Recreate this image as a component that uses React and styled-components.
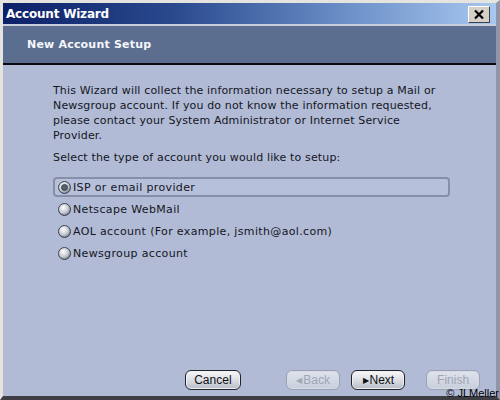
import styled, { createGlobalStyle } from "styled-components";

const Global = createGlobalStyle`
  html, body { margin: 0; padding: 0; background: #b1bbd6; }
  body { font-family: "DejaVu Sans", Verdana, sans-serif; }
`;

const accounts = [
  "ISP or email provider",
  "Netscape WebMail",
  "AOL account (For example, jsmith@aol.com)",
  "Newsgroup account",
];

const Radio = ({ checked }) => (
  <RadioDot viewBox="0 0 13 13" width="13" height="13">
    <defs>
      <radialGradient id={checked ? "rg-on" : "rg-off"} cx="40%" cy="35%" r="70%">
        <stop offset="0" stopColor="#ffffff" />
        <stop offset="0.6" stopColor="#c4c8d0" />
        <stop offset="1" stopColor="#6a707c" />
      </radialGradient>
    </defs>
    <circle cx="6.5" cy="6.5" r="6" fill={`url(#${checked ? "rg-on" : "rg-off"})`} stroke="#3c4250" strokeWidth="1" />
    {checked && <circle cx="6.5" cy="6.5" r="3" fill="#5a6070" stroke="#2e3340" strokeWidth="0.8" />}
  </RadioDot>
);

const App = () => {
  return (
    <>
      <Global />
      <Window>
        <TitleBar>
          <Title>Account Wizard</Title>
          <CloseButton>
            <svg width="12" height="11" viewBox="0 0 12 11">
              <path d="M2 1.5 L10 9.5 M10 1.5 L2 9.5" stroke="#000" strokeWidth="2.2" />
            </svg>
          </CloseButton>
        </TitleBar>
        <HeaderPanel>New Account Setup</HeaderPanel>
        <Body>
          <Intro>
            This Wizard will collect the information necessary to setup a Mail or
            <br />
            Newsgroup account. If you do not know the information requested,
            <br />
            please contact your System Administrator or Internet Service
            <br />
            Provider.
          </Intro>
          <Prompt>Select the type of account you would like to setup:</Prompt>
          <Options>
            {accounts.map((label, i) => (
              <Option key={label} $focused={i === 0}>
                <Radio checked={i === 0} />
                <span>{label}</span>
              </Option>
            ))}
          </Options>
        </Body>
        <Footer>
          <WizButton $w={56}>Cancel</WizButton>
          <Spacer />
          <WizButton disabled $w={55}>
            <Arrow>◀</Arrow>Back
          </WizButton>
          <WizButton $w={54}>
            <Arrow>▶</Arrow>Next
          </WizButton>
          <WizButton disabled $w={54} $gapBefore={10}>
            Finish
          </WizButton>
        </Footer>
        <Credit>© JLMeller</Credit>
      </Window>
    </>
  );
};

const Window = styled.div`
  position: relative;
  box-sizing: border-box;
  width: 500px;
  height: 400px;
  display: flex;
  flex-direction: column;
  background: #b1bbd6;
  border-top: 3px solid #e6e4de;
  border-left: 3px solid #e6e4de;
  border-right: 4px solid #8e96a8;
  border-bottom: 4px solid #3e3e44;
`;

const TitleBar = styled.div`
  height: 21px;
  display: flex;
  align-items: center;
  justify-content: space-between;
  padding: 0 6px 0 3px;
  background: linear-gradient(90deg, #0c2068 0%, #2a4a8e 35%, #6c90c8 70%, #a8c8f0 100%);
  border-bottom: 2px solid #c6cedc;
`;

const Title = styled.div`
  color: #ffffff;
  font-weight: bold;
  font-size: 12px;
  letter-spacing: -0.2px;
`;

const CloseButton = styled.div`
  box-sizing: border-box;
  width: 22px;
  height: 17px;
  display: flex;
  align-items: center;
  justify-content: center;
  background: #d4d0c8;
  border: 1px solid;
  border-color: #ffffff #404040 #404040 #ffffff;
  margin-top: 2px;
`;

const HeaderPanel = styled.div`
  height: 37px;
  display: flex;
  align-items: center;
  padding-left: 24px;
  background: #5b6e90;
  color: #f4f6fa;
  font-weight: bold;
  font-size: 11px;
  letter-spacing: 0.2px;
  border-bottom: 2px solid #0a0a10;
`;

const Body = styled.div`
  flex: 1;
  padding: 18px 26px 0 50px;
  color: #14161e;
  font-size: 11px;
  letter-spacing: 0.15px;
`;

const Intro = styled.p`
  margin: 0;
  line-height: 15px;
  white-space: nowrap;
`;

const Prompt = styled.p`
  margin: 7px 0 0;
  line-height: 15px;
`;

const Options = styled.div`
  margin-top: 12px;
  display: flex;
  flex-direction: column;
  gap: 2px;
  margin-right: 20px;
`;

const Option = styled.div`
  box-sizing: border-box;
  height: 20px;
  display: flex;
  align-items: center;
  gap: 2px;
  padding-left: 3px;
  letter-spacing: 0.35px;
  border: 2px solid ${(p) => (p.$focused ? "#8590a8" : "transparent")};
  border-radius: 4px;
  background: ${(p) => (p.$focused ? "#b6c0da" : "transparent")};
`;

const RadioDot = styled.svg`
  flex: none;
`;

const Footer = styled.div`
  display: flex;
  align-items: center;
  gap: 11px;
  padding: 0 16px 6px 182px;
`;

const Spacer = styled.div`
  width: 23px;
`;

const WizButton = styled.button`
  box-sizing: border-box;
  width: ${(p) => p.$w}px;
  height: 20px;
  margin-left: ${(p) => p.$gapBefore || 0}px;
  display: flex;
  align-items: center;
  justify-content: center;
  gap: 1px;
  padding: 0;
  font-family: "Liberation Sans", Arial, sans-serif;
  font-size: 12px;
  color: #101018;
  background: linear-gradient(180deg, #f8f8fa 0%, #dcdee4 50%, #b8bcc6 100%);
  border: 1px solid #22242c;
  border-radius: 6px;
  box-shadow: inset 0 0 0 1px #eef0f4;

  &:disabled {
    color: #a0a6b4;
    border-color: #9aa2b4;
    background: linear-gradient(180deg, #dfe3ec 0%, #c8cedc 100%);
    box-shadow: inset 0 0 0 1px #d6dae6;
  }
`;

const Arrow = styled.span`
  font-size: 8px;
`;

const Credit = styled.div`
  position: absolute;
  right: -4px;
  bottom: -3px;
  padding: 0 1px;
  font-family: "Liberation Sans", Arial, sans-serif;
  font-size: 11px;
  color: #000;
  line-height: 11px;
  z-index: 2;
`;

export default App;
